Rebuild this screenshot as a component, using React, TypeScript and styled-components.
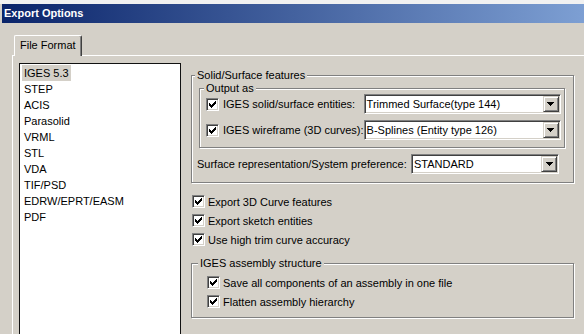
import React from "react";
import styled, { createGlobalStyle } from "styled-components";

const face = "#d4d0c8";
const shadow = "#808080";
const darkShadow = "#404040";
const highlight = "#ffffff";

const GlobalStyle = createGlobalStyle`
  html, body {
    margin: 0;
    padding: 0;
  }
  body {
    background: ${face};
    font-family: "Liberation Sans", Arial, sans-serif;
    font-size: 11px;
    color: #000;
    overflow: hidden;
  }
`;

const Window = styled.div`
  display: flex;
  flex-direction: column;
  width: 584px;
  height: 334px;
  overflow: hidden;
`;

const ScreenEdge = styled.div`
  height: 4px;
  background: #f1f1f1;
`;

const TitleBar = styled.div`
  height: 19px;
  line-height: 19px;
  margin-left: 2px;
  padding-left: 2px;
  background: linear-gradient(to right, #0a246a, #7d9fd3);
  color: ${highlight};
  font-weight: bold;
  font-size: 11px;
`;

const Body = styled.div`
  flex: 1;
  display: flex;
  flex-direction: column;
  min-height: 0;
  padding: 12px 0 0 12px;
`;

const TabStrip = styled.div`
  display: flex;
  padding-left: 2px;
`;

const Tab = styled.div`
  position: relative;
  z-index: 1;
  width: 68px;
  height: 21px;
  box-sizing: border-box;
  margin-bottom: -1px;
  padding: 3px 0 0 5px;
  background: ${face};
  border-top: 1px solid ${highlight};
  border-left: 1px solid ${highlight};
  border-right: 1px solid ${darkShadow};
  border-radius: 2px 2px 0 0;
  box-shadow: inset -1px 0 0 ${shadow};
  line-height: 13px;
`;

const Sheet = styled.div`
  flex: 1;
  display: flex;
  gap: 10px;
  min-height: 0;
  border-top: 1px solid ${highlight};
  border-left: 1px solid ${highlight};
  padding: 7px 0 0 6px;
`;

const FormatList = styled.ul`
  list-style: none;
  margin: 0;
  padding: 1px 0 0 2px;
  width: 162px;
  min-height: 290px;
  box-sizing: border-box;
  flex-shrink: 0;
  background: #fff;
  border: 1px solid #111;
`;

const FormatItem = styled.li<{ $selected?: boolean }>`
  width: fit-content;
  height: 16px;
  line-height: 16px;
  padding: 0 2px;
  background: ${(p) => (p.$selected ? face : "transparent")};
`;

const Options = styled.div`
  width: 383px;
  flex-shrink: 0;
  display: flex;
  flex-direction: column;
  padding-top: 12px;
`;

const GroupBox = styled.div<{ $pad: string; $top?: number; $left?: number }>`
  display: flex;
  flex-direction: column;
  margin: ${(p) => p.$top ?? 0}px 0 0 ${(p) => p.$left ?? 0}px;
  padding: ${(p) => p.$pad};
  border: 1px solid ${shadow};
  box-shadow: inset 1px 1px 0 ${highlight}, 1px 1px 0 ${highlight};
`;

const Legend = styled.div<{ $indent: number }>`
  align-self: flex-start;
  margin: -7px 0 0 ${(p) => p.$indent}px;
  padding: 0 2px;
  line-height: 12px;
  background: ${face};
`;

const OutputGrid = styled.div`
  display: grid;
  grid-template-columns: 1fr 197px;
  grid-auto-rows: 20px;
  row-gap: 6px;
`;

const CheckRow = styled.label<{ $gap?: number; $height?: number }>`
  display: flex;
  align-items: center;
  gap: ${(p) => p.$gap ?? 4}px;
  height: ${(p) => p.$height ?? 19}px;
  white-space: nowrap;
`;

const LooseChecks = styled.div`
  display: flex;
  flex-direction: column;
  margin: 9px 0 0 1px;
`;

const AssemblyRows = styled.div`
  display: flex;
  flex-direction: column;
  margin-top: 4px;
`;

const SurfaceRow = styled.div`
  display: flex;
  align-items: center;
  justify-content: space-between;
  margin: 6px 6px 0 0;
`;

const Box = styled.span`
  display: flex;
  flex-shrink: 0;
  width: 13px;
  height: 13px;
  box-sizing: border-box;
  padding: 2px;
  background: #fff;
  border-top: 1px solid ${shadow};
  border-left: 1px solid ${shadow};
  border-bottom: 1px solid ${highlight};
  border-right: 1px solid ${highlight};
  box-shadow: inset 1px 1px 0 ${darkShadow}, inset -1px -1px 0 ${face};
`;

const Combo = styled.div<{ $width: number }>`
  display: flex;
  align-items: center;
  width: ${(p) => p.$width}px;
  height: 20px;
  box-sizing: border-box;
  padding: 1px;
  background: #fff;
  border-top: 1px solid ${shadow};
  border-left: 1px solid ${shadow};
  border-bottom: 1px solid ${highlight};
  border-right: 1px solid ${highlight};
  box-shadow: inset 1px 1px 0 ${darkShadow}, inset -1px -1px 0 ${face};
`;

const ComboText = styled.span`
  flex: 1;
  padding-left: 1px;
  white-space: nowrap;
  overflow: hidden;
`;

const ComboButton = styled.span`
  display: flex;
  align-items: center;
  justify-content: center;
  width: 16px;
  height: 16px;
  box-sizing: border-box;
  background: ${face};
  border-top: 1px solid ${face};
  border-left: 1px solid ${face};
  border-right: 1px solid ${darkShadow};
  border-bottom: 1px solid ${darkShadow};
  box-shadow: inset 1px 1px 0 ${highlight}, inset -1px -1px 0 ${shadow};
`;

// classic 7x7 tick: each column is a 3px run
const tickTops = [2, 3, 4, 3, 2, 1, 0];

const Check = () => (
  <Box>
    <svg width="7" height="7" viewBox="0 0 7 7" shapeRendering="crispEdges">
      {tickTops.map((y, x) => (
        <rect key={x} x={x} y={y} width="1" height="3" fill="#000" />
      ))}
    </svg>
  </Box>
);

const Arrow = () => (
  <svg width="7" height="4" viewBox="0 0 7 4" shapeRendering="crispEdges">
    <path d="M0 0h7v1H0zM1 1h5v1H1zM2 2h3v1H2zM3 3h1v1H3z" fill="#000" />
  </svg>
);

const Dropdown = ({ width, value }: { width: number; value: string }) => (
  <Combo $width={width}>
    <ComboText>{value}</ComboText>
    <ComboButton>
      <Arrow />
    </ComboButton>
  </Combo>
);

const formats = [
  "IGES 5.3",
  "STEP",
  "ACIS",
  "Parasolid",
  "VRML",
  "STL",
  "VDA",
  "TIF/PSD",
  "EDRW/EPRT/EASM",
  "PDF",
];

const App = () => {
  return (
    <Window>
      <GlobalStyle />
      <ScreenEdge />
      <TitleBar>Export Options</TitleBar>
      <Body>
        <TabStrip>
          <Tab>File Format</Tab>
        </TabStrip>
        <Sheet>
          <FormatList>
            {formats.map((f, i) => (
              <FormatItem key={f} $selected={i === 0}>
                {f}
              </FormatItem>
            ))}
          </FormatList>
          <Options>
            <GroupBox $pad="0 8px 8px 5px">
              <Legend $indent={-2}>Solid/Surface features</Legend>
              <GroupBox $pad="0 5px 7px 6px" $top={7} $left={2}>
                <Legend $indent={-2}>Output as</Legend>
                <OutputGrid>
                  <CheckRow $height={20}>
                    <Check />
                    IGES solid/surface entities:
                  </CheckRow>
                  <Dropdown width={197} value="Trimmed Surface(type 144)" />
                  <CheckRow $height={20}>
                    <Check />
                    IGES wireframe (3D curves):
                  </CheckRow>
                  <Dropdown width={197} value="B-Splines (Entity type 126)" />
                </OutputGrid>
              </GroupBox>
              <SurfaceRow>
                <span>Surface representation/System preference:</span>
                <Dropdown width={148} value="STANDARD" />
              </SurfaceRow>
            </GroupBox>
            <LooseChecks>
              <CheckRow $gap={3}>
                <Check />
                Export 3D Curve features
              </CheckRow>
              <CheckRow $gap={3}>
                <Check />
                Export sketch entities
              </CheckRow>
              <CheckRow $gap={3}>
                <Check />
                Use high trim curve accuracy
              </CheckRow>
            </LooseChecks>
            <GroupBox $pad="0 8px 6px 15px" $top={14}>
              <Legend $indent={-9}>IGES assembly structure</Legend>
              <AssemblyRows>
                <CheckRow $gap={3}>
                  <Check />
                  Save all components of an assembly in one file
                </CheckRow>
                <CheckRow $gap={3}>
                  <Check />
                  Flatten assembly hierarchy
                </CheckRow>
              </AssemblyRows>
            </GroupBox>
          </Options>
        </Sheet>
      </Body>
    </Window>
  );
};

export default App;
